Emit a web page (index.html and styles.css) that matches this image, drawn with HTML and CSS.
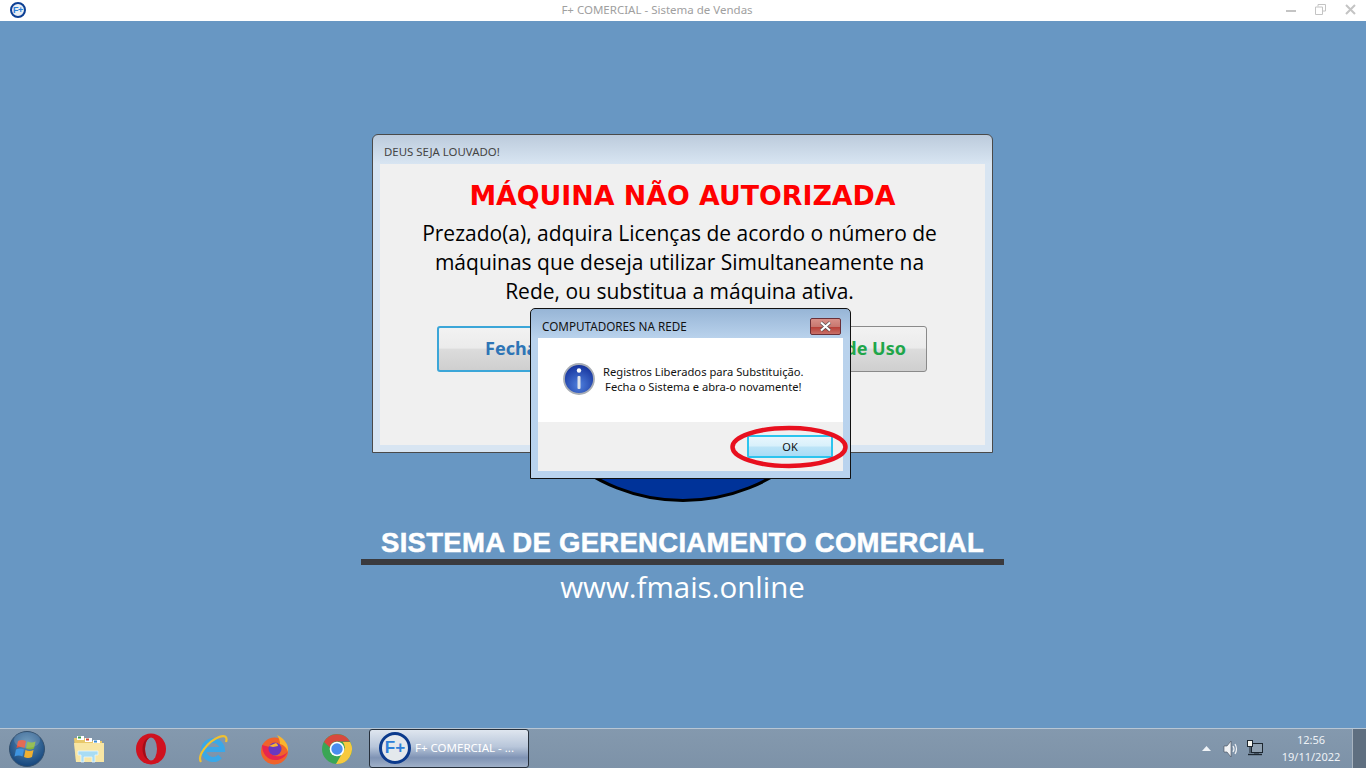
FILE: index.html
```html
<!DOCTYPE html>
<html lang="en">
<head>
    <meta charset="UTF-8">
    <meta name="viewport" content="width=device-width, initial-scale=1.0">
    <title>F+ COMERCIAL - Sistema de Vendas</title>
    <link rel="stylesheet" href="styles.css">
</head>
<body>
    <!-- App title bar -->
    <header class="titlebar">
        <div class="app-icon">F+</div>
        <span class="titlebar-text">F+ COMERCIAL - Sistema de Vendas</span>
        <div class="window-controls">
            <svg width="10" height="10" viewBox="0 0 10 10"><rect x="0" y="5" width="10" height="2" fill="#c4c4c4"/></svg>
            <svg width="11" height="11" viewBox="0 0 11 11"><path d="M3 2.500V.5h7.500v6.500H8M.5 3h7v7.500h-7z" fill="none" stroke="#c4c4c4"/></svg>
            <svg width="11" height="11" viewBox="0 0 11 11"><path d="M1 1l9 9M10 1l-9 9" stroke="#c4c4c4" stroke-width="2"/></svg>
        </div>
    </header>

    <main class="desktop">
        <!-- Logo behind the windows -->
        <div class="logo-disc"></div>
        <div class="brand">
            <div class="brand-name">SISTEMA DE GERENCIAMENTO COMERCIAL</div>
            <div class="brand-rule"></div>
            <div class="brand-url">www.fmais.online</div>
        </div>

        <!-- Licence window -->
        <section class="window license">
            <div class="window-title">DEUS SEJA LOUVADO!</div>
            <div class="license-body">
                <h1>MÁQUINA NÃO AUTORIZADA</h1>
                <p>Prezado(a), adquira Licenças de acordo o número de<br>máquinas que deseja utilizar Simultaneamente na<br>Rede, ou substitua a máquina ativa.</p>
                <div class="license-actions">
                    <button class="big-btn big-btn-close">Fechar</button>
                    <button class="big-btn big-btn-terms">Termos de Uso</button>
                </div>
            </div>
        </section>

        <!-- Message box -->
        <section class="window dialog">
            <div class="dialog-title">
                <span>COMPUTADORES NA REDE</span>
                <button class="close-btn" aria-label="Fechar">
                    <svg width="15" height="11" viewBox="0 0 15 11"><path d="M3 1.500l9 8M12 1.500l-9 8" stroke="#4d4a4a" stroke-width="3.400"/><path d="M3 1.500l9 8M12 1.500l-9 8" stroke="#fff" stroke-width="2.200"/></svg>
                </button>
            </div>
            <div class="dialog-body">
                <div class="dialog-message">
                    <svg class="info-icon" width="32" height="32" viewBox="0 0 32 32">
                        <defs>
                            <radialGradient id="infoFill" cx="0.5" cy="0.7" r="0.7">
                                <stop offset="0" stop-color="#4f7fdc"/>
                                <stop offset="1" stop-color="#13309a"/>
                            </radialGradient>
                        </defs>
                        <circle cx="16" cy="16" r="15" fill="url(#infoFill)" stroke="#a8adb5" stroke-width="1.800"/>
                        <circle cx="16" cy="7.500" r="2.200" fill="#fff"/>
                        <rect x="14.500" y="13" width="3" height="13" rx="1" fill="#dfe3ea"/>
                    </svg>
                    <p>Registros Liberados para Substituição.<br>Fecha o Sistema e abra-o novamente!</p>
                </div>
                <div class="dialog-footer">
                    <button class="ok-btn">OK</button>
                </div>
            </div>
        </section>

        <!-- Red marker drawn over the screenshot -->
        <svg class="marker" width="122" height="46" viewBox="0 0 122 46">
            <ellipse cx="61" cy="23" rx="56.500" ry="19" fill="none" stroke="#e8101f" stroke-width="4.500"/>
        </svg>
    </main>

    <footer class="taskbar">
        <svg class="start-orb" width="38" height="38" viewBox="0 0 38 38">
            <defs>
                <radialGradient id="orb" cx="0.5" cy="0.35" r="0.7">
                    <stop offset="0" stop-color="#5d8fb5"/>
                    <stop offset="1" stop-color="#0f3f78"/>
                </radialGradient>
            </defs>
            <circle cx="19" cy="19" r="17.500" fill="url(#orb)" stroke="#33506e"/>
            <path d="M10 11q4-2 8 0l-1.500 7q-4-2-8 0z" fill="#e0533a"/>
            <path d="M19.500 11.500q4 2 8 0l-1.500 7q-4 2-8 0z" fill="#86b43c"/>
            <path d="M8 19.500q4-2 8 0l-1.500 7q-4-2-8 0z" fill="#3f94e0"/>
            <path d="M17.500 20q4 2 8 0l-1.500 7q-4 2-8 0z" fill="#f0b030"/>
            <ellipse cx="19" cy="10" rx="13" ry="8" fill="#fff" opacity=".14"/>
        </svg>

        <div class="pinned">
            <svg width="32" height="32" viewBox="0 0 32 32">
                <path d="M1 5h12l2 3h14v20H3z" fill="#e8c86a"/>
                <rect x="4" y="3" width="7" height="4" fill="#fff"/><rect x="5" y="3.500" width="3" height="2" fill="#3aa04a"/>
                <rect x="12" y="5" width="7" height="4" fill="#fff"/><rect x="13" y="5.500" width="3" height="2" fill="#d24a3a"/>
                <rect x="20" y="7" width="7" height="4" fill="#fff"/><rect x="21" y="7.500" width="3" height="2" fill="#3a8ad2"/>
                <path d="M1 10h30v19H3z" fill="#f8e6a4"/>
                <path d="M5 18h20v4h-3v7h-3v-5h-8v5H8v-7H5z" fill="#a8dcf4" stroke="#e8f6fc" stroke-width=".8"/>
            </svg>
            <svg width="32" height="32" viewBox="0 0 32 32">
                <ellipse cx="16" cy="16" rx="15" ry="15.500" fill="#d0121f"/>
                <ellipse cx="16" cy="16" rx="6" ry="11.500" fill="#7f8fa6"/>
                <path d="M16 4.500c-3.500 0-6 5-6 11.500s2.500 11.500 6 11.500c-5 0-8.500-5-8.500-11.500S11 4.500 16 4.500z" fill="#a20d18"/>
            </svg>
            <svg width="32" height="32" viewBox="0 0 32 32">
                <path d="M8 16.500h17.500a9.500 9.500 0 1 0-2.500 7" fill="none" stroke="#3aa8e8" stroke-width="5"/>
                <path d="M4 29C0 23 10 9 22 4c5-2 9-1 7 5" fill="none" stroke="#f0c030" stroke-width="2.200"/>
            </svg>
            <svg width="32" height="32" viewBox="0 0 32 32">
                <circle cx="15.500" cy="18" r="13.500" fill="#f0622a"/>
                <path d="M18 2c8 4 12 10 11 17-1-4-4-7-8-8 0-3-1-6-3-9z" fill="#f9b52e"/>
                <path d="M3 12c0 9 6 16 15 15 5-.5 9-4 10.500-8-3 3-7 5-12 4-5-1-7-5-6-9z" fill="#e8264e"/>
                <circle cx="16" cy="16" r="6.500" fill="#6a38c0"/>
                <path d="M10 13l7-3c2 1 2 3 2 3l-5 1z" fill="#f9b52e"/>
            </svg>
            <svg width="32" height="32" viewBox="0 0 32 32">
                <circle cx="16" cy="16" r="15" fill="#3aa655"/>
                <path d="M3 9A15 15 0 0 1 29 8.500H16a7.500 7.500 0 0 0-7.300 5.800z" fill="#d8493d"/>
                <path d="M29.200 9A15 15 0 0 1 15 31l6.500-11.300a7.500 7.500 0 0 0 .2-10.700z" fill="#f8c93e"/>
                <circle cx="16" cy="16" r="7.300" fill="#fff"/>
                <circle cx="16" cy="16" r="5.700" fill="#4a8df0"/>
            </svg>
        </div>

        <div class="task-item">
            <div class="task-icon">F+</div>
            <span>F+ COMERCIAL - ...</span>
        </div>

        <div class="tray">
            <svg width="9" height="6" viewBox="0 0 9 6"><path d="M4.500 0L9 5H0z" fill="#eef2f6"/></svg>
            <svg width="16" height="18" viewBox="0 0 16 18">
                <path d="M1 6h3l4-5v16l-4-5H1z" fill="#f0f2f5" stroke="#444c58" stroke-width=".6"/>
                <path d="M10 6q2 3 0 6M12 4q3 5 0 10" fill="none" stroke="#f0f2f5" stroke-width="1.200"/>
            </svg>
            <svg width="17" height="17" viewBox="0 0 17 17">
                <rect x="4.500" y="3.500" width="11" height="9" fill="#8fa0b0" stroke="#1d2730"/>
                <path d="M1 14.500h14" stroke="#1d2730" stroke-width="1.400"/>
                <path d="M7 13h5" stroke="#1d2730"/>
                <rect x=".5" y=".5" width="5" height="6" fill="#f6f6f0" stroke="#1d2730"/>
                <path d="M3 7v6" stroke="#1d2730"/>
            </svg>
            <div class="clock">
                <div>12:56</div>
                <div>19/11/2022</div>
            </div>
            <div class="show-desktop"></div>
        </div>
    </footer>
</body>
</html>
```

FILE: styles.css
```css
/* Reset some default styles */
* {
    margin: 0;
    padding: 0;
    box-sizing: border-box;
}

html, body {
    width: 1366px;
    height: 768px;
    overflow: hidden;
}

body {
    display: flex;
    flex-direction: column;
    font-family: "Noto Sans", "DejaVu Sans", sans-serif;
    background-color: #6897c3;
}

button {
    font-family: inherit;
}

/* App title bar */
.titlebar {
    height: 21px;
    flex: none;
    display: flex;
    align-items: center;
    background-color: #fff;
    position: relative;
    padding-left: 10px;
    padding-bottom: 2px;
}

.app-icon {
    width: 16px;
    height: 16px;
    display: flex;
    align-items: center;
    justify-content: center;
    border: 2px solid #0c3f94;
    border-radius: 50%;
    background-color: #e8eef5;
    color: #2b7fd8;
    font-family: "Liberation Sans", Arial, sans-serif;
    font-size: 9px;
    font-weight: bold;
    letter-spacing: -.3px;
}

.titlebar-text {
    position: absolute;
    left: 0;
    right: 52px;
    text-align: center;
    font-size: 11.500px;
    color: #a0a0a0;
}

.window-controls {
    margin-left: auto;
    display: flex;
    align-items: center;
    gap: 19px;
    padding-right: 10px;
}

/* Desktop holds the free floating windows */
.desktop {
    flex: 1;
    position: relative;
    background-color: #6897c3;
}

.logo-disc {
    position: absolute;
    left: 502px;
    top: 119px;
    width: 362px;
    height: 362px;
    border-radius: 50%;
    background-color: #003399;
    border: 3px solid #000;
}

.brand {
    position: absolute;
    left: 361px;
    top: 506px;
    width: 643px;
    text-align: center;
    color: #fff;
}

.brand-name {
    font-family: "Liberation Sans", Arial, sans-serif;
    font-size: 27.500px;
    font-weight: bold;
    line-height: 32px;
    letter-spacing: .3px;
    -webkit-text-stroke: .5px #fff;
}

.brand-rule {
    height: 6px;
    background-color: #3a3a3e;
}

.brand-url {
    font-family: "Open Sans", sans-serif;
    font-size: 29.500px;
    line-height: 40px;
    margin-top: 2px;
}

.window {
    position: absolute;
    border-radius: 6px 6px 0 0;
}

/* Licence window */
.license {
    left: 372px;
    top: 113px;
    width: 621px;
    height: 319px;
    padding: 0 7px 7px;
    border: 1px solid #4a4a4a;
    background: linear-gradient(#bccbdc 0, #d8e5f2 29px, #d8e5f2 100%);
}

.window-title {
    height: 29px;
    padding-left: 4px;
    padding-top: 9px;
    font-size: 11.400px;
    line-height: 15px;
    color: #444;
}

.license-body {
    height: 281px;
    background-color: #f0f0f0;
    text-align: center;
}

.license-body h1 {
    font-family: "DejaVu Sans", Verdana, sans-serif;
    font-size: 26.800px;
    font-weight: bold;
    line-height: 30px;
    height: 64px;
    padding-top: 17px;
    color: #ff0000;
}

.license-body p {
    font-family: "Open Sans", sans-serif;
    font-size: 21px;
    line-height: 29px;
    font-weight: 500;
    color: #000;
    margin-top: -9px;
    padding-right: 6px;
}

.license-actions {
    display: flex;
    justify-content: space-between;
    margin: 20px 58px 0 57px;
}

.big-btn {
    width: 235px;
    height: 46px;
    font-size: 18px;
    font-weight: bold;
    border-radius: 3px;
    padding-bottom: 2px;
    background: linear-gradient(#f2f2f2 0, #ebebeb 48%, #dcdcdc 50%, #cfcfcf 100%);
}

.big-btn-close {
    color: #2e75b6;
    border: 2px solid #3ba6d8;
    text-align: left;
    padding-left: 46px;
}

.big-btn-terms {
    color: #1fa64a;
    border: 1px solid #8a8a8a;
    text-align: right;
    padding-right: 20px;
}

/* Message box */
.dialog {
    left: 530px;
    top: 287px;
    width: 321px;
    height: 171px;
    padding: 0 7px 7px;
    border: 1px solid #111;
    border-radius: 5px 5px 0 0;
    background: linear-gradient(#97b5d6 0, #b9d2ec 29px, #b9d3ee 100%);
}

.dialog-title {
    height: 29px;
    display: flex;
    justify-content: space-between;
    align-items: center;
    padding: 5px 2px 0 4px;
    font-size: 11.700px;
    color: #111;
}

.close-btn {
    width: 31px;
    height: 17px;
    display: flex;
    align-items: center;
    justify-content: center;
    border: 1px solid #6a3038;
    border-radius: 2px;
    background: linear-gradient(#d89088 0, #c87870 50%, #b84038 55%, #c87068 100%);
}

.dialog-body {
    height: 133px;
    display: flex;
    flex-direction: column;
}

.dialog-message {
    height: 84px;
    flex: none;
    background-color: #fff;
    display: flex;
    padding: 25px 0 0 25px;
}

.info-icon {
    flex: none;
    margin-right: 8px;
}

.dialog-message p {
    font-size: 11.200px;
    line-height: 15px;
    text-align: center;
    color: #111;
    padding-top: 1px;
}

.dialog-footer {
    flex: 1;
    background-color: #f0f0f0;
    display: flex;
    justify-content: flex-end;
    padding: 13px 10px 0 0;
}

.ok-btn {
    width: 86px;
    height: 23px;
    font-size: 11px;
    color: #111;
    border: 2px solid #2cc4ee;
    border-radius: 2px;
    background: linear-gradient(#e8f6fd 0, #d8f0fb 48%, #bde4f7 52%, #a8dcf6 100%);
}

.marker {
    position: absolute;
    left: 728px;
    top: 403px;
}

/* Taskbar */
.taskbar {
    height: 40px;
    flex: none;
    display: flex;
    align-items: center;
    border-top: 1px solid #b8c6d4;
    background: linear-gradient(#8499ae, #7d92a8);
}

.start-orb {
    margin-left: 8px;
    flex: none;
}

.pinned {
    display: flex;
    align-items: center;
    gap: 30px;
    margin-left: 27px;
}

.task-item {
    width: 160px;
    height: 39px;
    margin-left: 16px;
    display: flex;
    align-items: center;
    gap: 4px;
    padding-left: 9px;
    padding-bottom: 2px;
    border: 1px solid #26303c;
    border-radius: 3px;
    background: linear-gradient(#dfe6ef 0, #b8c6da 45%, #7f93b4 75%, #9fb0c8 100%);
    color: #fff;
    font-size: 11.500px;
    white-space: nowrap;
}

.task-icon {
    width: 32px;
    height: 32px;
    flex: none;
    display: flex;
    align-items: center;
    justify-content: center;
    border-radius: 50%;
    border: 3px solid #0b3a8c;
    background-color: #e4e8ec;
    color: #2f80d8;
    font-family: "Liberation Sans", Arial, sans-serif;
    font-size: 17px;
    font-weight: bold;
}

.tray {
    margin-left: auto;
    height: 100%;
    display: flex;
    align-items: center;
}

.tray svg:nth-child(1) {
    margin-right: 12px;
}

.tray svg:nth-child(2) {
    margin-right: 8px;
}

.clock {
    width: 76px;
    margin-left: 9px;
    margin-right: 3px;
    padding-bottom: 2px;
    text-align: center;
    color: #eef2f6;
    font-size: 11px;
    line-height: 17px;
}

.show-desktop {
    width: 14px;
    height: 100%;
    background-color: #5f6f80;
    border-left: 1px solid #a8b4c0;
}
```
